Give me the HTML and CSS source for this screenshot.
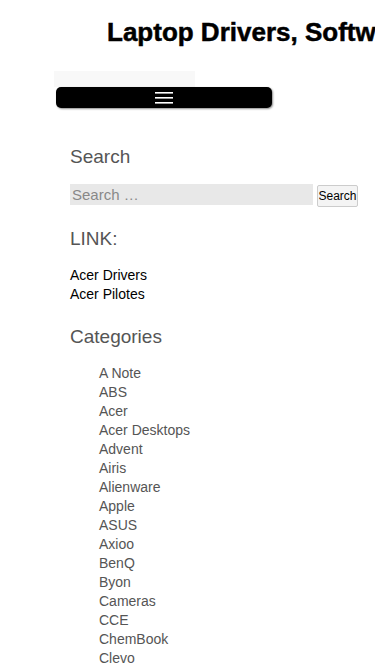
FILE: index.html
```html
<!DOCTYPE html>
<html lang="en">
<head>
  <meta charset="UTF-8">
  <meta name="viewport" content="width=device-width, initial-scale=1.0">
  <title>Laptop Drivers, Software</title>
  <link rel="stylesheet" href="styles.css">
</head>
<body>
  <header class="site-header">
    <h1 class="site-title">Laptop Drivers, Software and Tools</h1>
    <div class="nav-wrap">
      <div class="nav-ghost"></div>
      <button class="menu-toggle" aria-label="Menu">
        <svg width="18" height="12" viewBox="0 0 18 12">
          <rect x="0" y="0" width="18" height="1.6" fill="#fff"/>
          <rect x="0" y="5" width="18" height="1.6" fill="#fff"/>
          <rect x="0" y="10" width="18" height="1.6" fill="#fff"/>
        </svg>
      </button>
    </div>
  </header>

  <aside class="sidebar">
    <section class="widget">
      <h3 class="widget-title">Search</h3>
      <form class="search-form">
        <input type="search" class="search-field" placeholder="Search …">
        <button type="button" class="search-submit">Search</button>
      </form>
    </section>

    <section class="widget">
      <h3 class="widget-title">LINK:</h3>
      <ul class="links">
        <li><a href="#">Acer Drivers</a></li>
        <li><a href="#">Acer Pilotes</a></li>
      </ul>
    </section>

    <section class="widget">
      <h3 class="widget-title">Categories</h3>
      <ul class="cats">
        <li><a href="#">A Note</a></li>
        <li><a href="#">ABS</a></li>
        <li><a href="#">Acer</a></li>
        <li><a href="#">Acer Desktops</a></li>
        <li><a href="#">Advent</a></li>
        <li><a href="#">Airis</a></li>
        <li><a href="#">Alienware</a></li>
        <li><a href="#">Apple</a></li>
        <li><a href="#">ASUS</a></li>
        <li><a href="#">Axioo</a></li>
        <li><a href="#">BenQ</a></li>
        <li><a href="#">Byon</a></li>
        <li><a href="#">Cameras</a></li>
        <li><a href="#">CCE</a></li>
        <li><a href="#">ChemBook</a></li>
        <li><a href="#">Clevo</a></li>
      </ul>
    </section>
  </aside>
</body>
</html>
```

FILE: styles.css
```css
body {
  margin: 0;
  font-family: "Liberation Sans", Arial, sans-serif;
  background-color: #fff;
  color: #555;
  overflow-x: hidden;
}
.site-header {
  padding-top: 18px;
}
.site-title {
  margin: 0 0 0 107px;
  font-size: 26px;
  line-height: 28px;
  font-weight: bold;
  color: #000;
  white-space: nowrap;
  -webkit-text-stroke: 0.5px #000;
}
.nav-wrap {
  margin: 25px 0 0 54px;
  width: 220px;
}
.nav-ghost {
  width: 141px;
  height: 16px;
  background-color: #f8f8f8;
}
.menu-toggle {
  display: flex;
  align-items: center;
  justify-content: center;
  margin-left: 2px;
  width: 216px;
  height: 21px;
  padding: 0;
  border: none;
  border-radius: 5px;
  background-color: #000;
  box-shadow: 1px 1px 2px rgba(0, 0, 0, 0.45);
  cursor: pointer;
}
.sidebar {
  padding: 38px 17px 0 70px;
}
.widget {
  margin-bottom: 22px;
}
.widget:first-child {
  margin-bottom: 21px;
}
.widget-title {
  margin: 0 0 16px;
  font-size: 19px;
  line-height: 22px;
  font-weight: normal;
  color: #555;
}
.search-form {
  display: flex;
  align-items: flex-start;
  gap: 4px;
}
.search-field {
  width: 243px;
  height: 21px;
  padding: 0 2px;
  border: none;
  background-color: #e8e8e8;
  font-family: inherit;
  font-size: 15px;
  color: #555;
  box-sizing: border-box;
}
.search-field::placeholder {
  color: #888;
}
.search-submit {
  margin-top: 1px;
  width: 41px;
  height: 22px;
  padding: 0;
  border: 1px solid #ccc;
  border-radius: 2px;
  background-color: #f4f4f4;
  font-family: inherit;
  font-size: 12px;
  color: #000;
}
.links, .cats {
  list-style: none;
  margin: 0;
  padding: 0;
}
.links li, .cats li {
  font-size: 14px;
  line-height: 19px;
}
.links a {
  color: #000;
  text-decoration: none;
}
.cats {
  padding-left: 29px;
}
.cats a {
  color: #555;
  text-decoration: none;
}
```
